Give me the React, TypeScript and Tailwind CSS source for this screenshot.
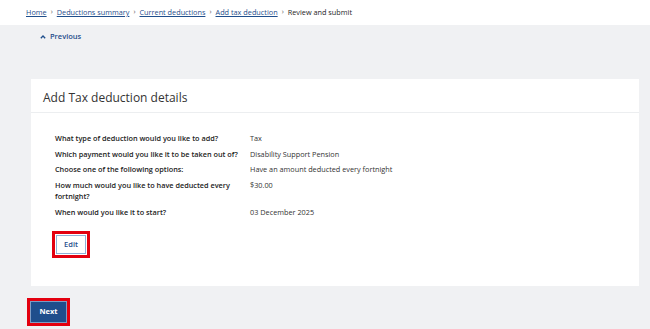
import React from "react";

const rows: { label: React.ReactNode; value: string; h: string }[] = [
  { label: "What type of deduction would you like to add?", value: "Tax", h: "h-[15.5px]" },
  { label: "Which payment would you like it to be taken out of?", value: "Disability Support Pension", h: "h-[15.5px]" },
  { label: "Choose one of the following options:", value: "Have an amount deducted every fortnight", h: "h-[15.5px]" },
  { label: "How much would you like to have deducted every fortnight?", value: "$30.00", h: "h-[27px]" },
  { label: "When would you like it to start?", value: "03 December 2025", h: "h-[15.5px]" },
];

export default function App() {
  const font = { fontFamily: '"Open Sans", "Noto Sans", sans-serif' };
  return (
    <div className="w-[650px] h-[329px] overflow-hidden bg-[#f0f1f3] text-[#1d1d1d]" style={font}>
      <div className="h-[25px] bg-white flex items-center pl-[26px] text-[7.3px] gap-[4px]">
        <a className="text-[#1f4e8c] underline">Home</a>
        <span className="text-[#555] text-[7px]">›</span>
        <a className="text-[#1f4e8c] underline">Deductions summary</a>
        <span className="text-[#555] text-[7px]">›</span>
        <a className="text-[#1f4e8c] underline">Current deductions</a>
        <span className="text-[#555] text-[7px]">›</span>
        <a className="text-[#1f4e8c] underline">Add tax deduction</a>
        <span className="text-[#555] text-[7px]">›</span>
        <span className="text-[#1d1d1d]">Review and submit</span>
      </div>
      <div className="pl-[40px] pt-[6px] h-[54px]">
        <div className="flex items-center gap-[4px] text-[#1f4e8c] font-semibold text-[7.5px]">
          <svg width="6" height="4" viewBox="0 0 6 4"><path d="M0.8 3.3 L3 1 L5.2 3.3" fill="none" stroke="#1f4e8c" strokeWidth="1.3" /></svg>
          <span>Previous</span>
        </div>
      </div>
      <div className="ml-[31px] w-[608px] bg-white">
        <div className="h-[34px] border-b border-[#eceef0] flex items-center pt-[5px] pl-[12px] text-[12px] text-[#333]">
          Add Tax deduction details
        </div>
        <div className="pl-[24px] pt-[20px] pb-[28px]">
          {rows.map((r, i) => (
            <div key={i} className={`flex text-[7.3px] leading-[11px] ${r.h}`}>
              <div className="w-[195px] font-semibold text-[#222] pr-[6px]">{r.label}</div>
              <div className="text-[#333]">{r.value}</div>
            </div>
          ))}
          <div className="mt-[9px] ml-[-3px] w-[38px] h-[27px] border-[3px] border-[#e3000f] p-[1px]">
            <div className="w-full h-full bg-white border border-[#8fb0d6] flex items-center justify-center text-[7.5px] font-semibold text-[#1f4e8c]">
              Edit
            </div>
          </div>
        </div>
      </div>
      <div className="ml-[27px] mt-[12px] w-[43px] h-[28px] border-[3px] border-[#e3000f] p-[0px]">
        <div className="w-full h-full bg-[#1f4e8c] border border-[#7f9cc4] flex items-center justify-center text-[7.5px] font-bold text-white">
          Next
        </div>
      </div>
    </div>
  );
}
